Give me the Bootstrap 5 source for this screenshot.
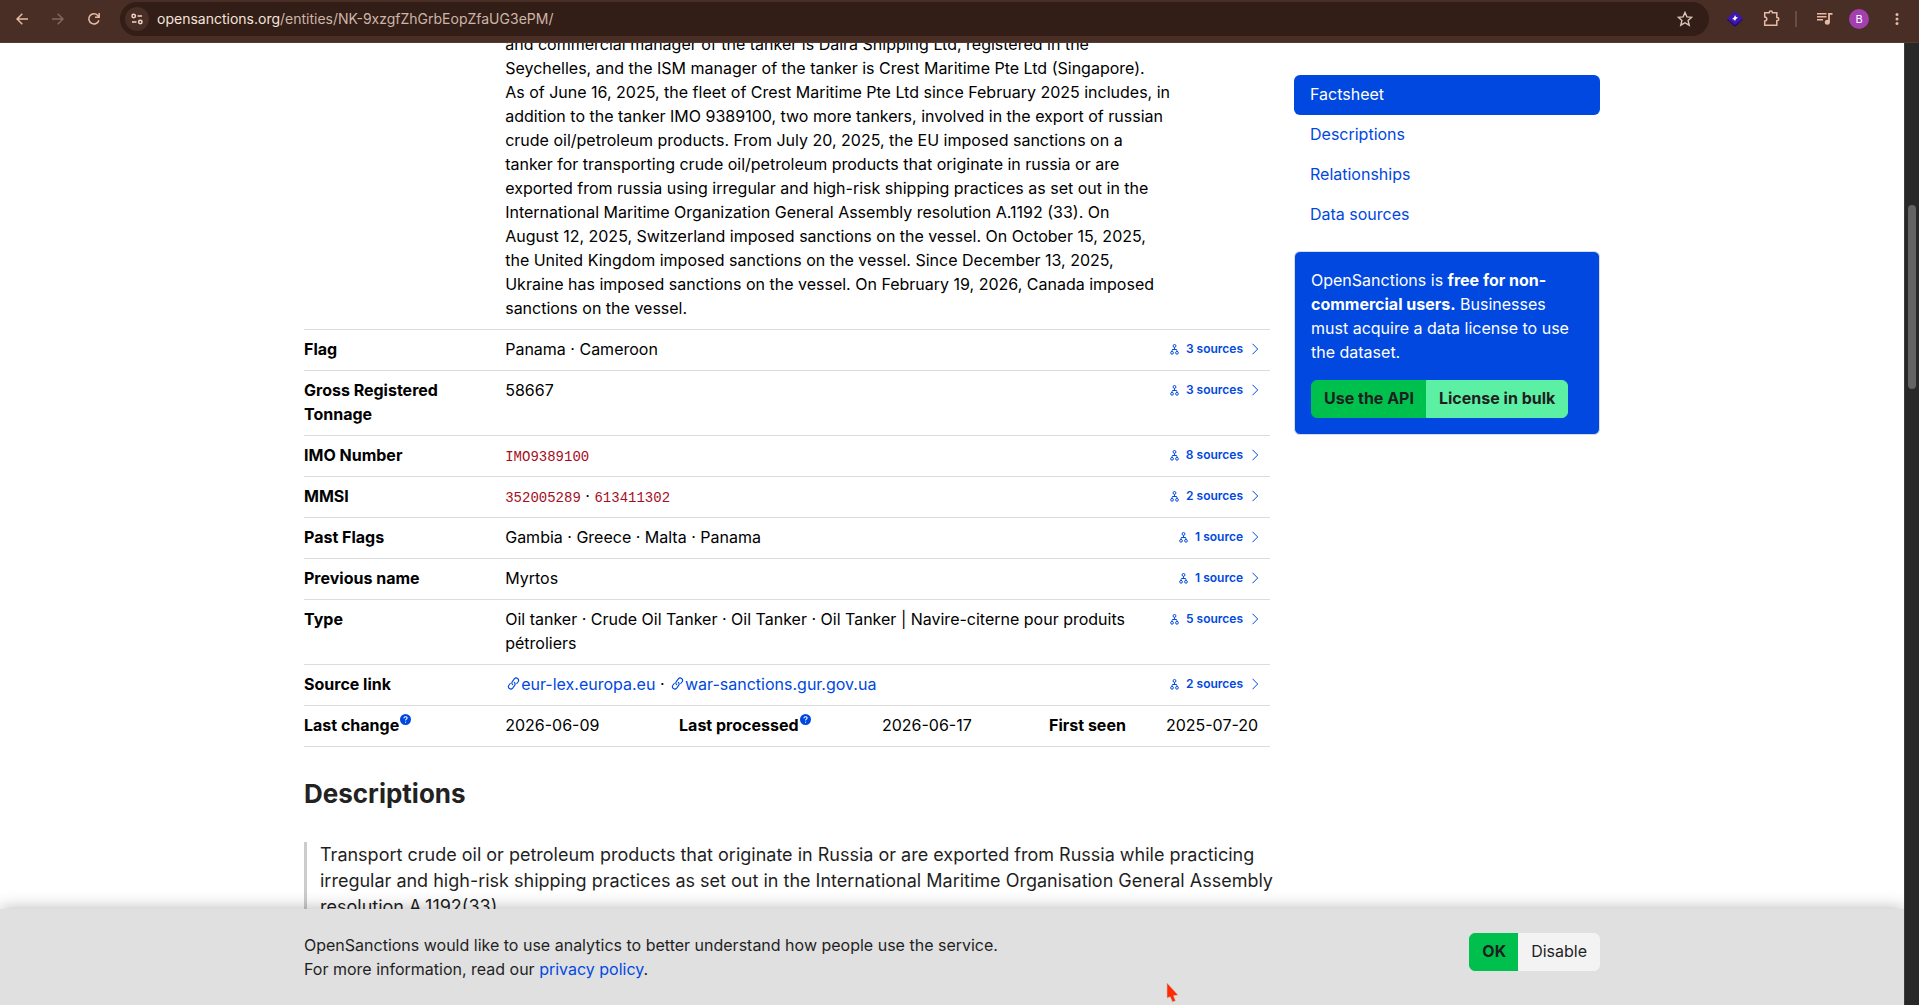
<!DOCTYPE html>
<html lang="en">
<head>
<meta charset="utf-8">
<meta name="viewport" content="width=device-width, initial-scale=1">
<title>OpenSanctions</title>
<link href="https://cdn.jsdelivr.net/npm/bootstrap@5.3.0/dist/css/bootstrap.min.css" rel="stylesheet">
<style>
:root{--os-blue:#0048e0;--os-green:#00c04d;--os-mint:#5cf0a5;--os-dark:#1f1f1f}
body{font-family:Inter,"Liberation Sans",sans-serif;font-size:16px;line-height:24px;color:var(--os-dark)}
a{color:var(--os-blue);text-decoration:none}
svg{display:block;flex:none}
/* browser toolbar */
.toolbar-top{height:43px;padding:2px 10px 7px;background:#482e24;border-bottom:1px solid #543c33;color:#e8b9a4}
.nav-btns{gap:12px}
.tool-btn{width:24px;height:34px;border:0;padding:0;background:none;color:inherit;display:flex;align-items:center;justify-content:center}
.tool-btn:disabled{color:#84685c}
.addr{height:34px;border-radius:17px;background:#321e16;padding:0 12px 0 5px;margin:0 14px}
.site-info{width:24px;height:24px;border-radius:50%;background:#482e24;color:#f2d8cc;border:0;padding:0;display:flex;align-items:center;justify-content:center}
.addr-line{font-size:14px;line-height:20px;color:#cdb5aa}
.addr-line b{font-weight:400;color:#f5e3db}
.tool-sep{width:2px;height:16px;background:#6a4b3e}
.avatar-dot{width:20px;height:20px;border-radius:50%;background:#a43fb0;color:#fff;font-size:11px;line-height:20px;border:0;padding:0}
/* page area */
.pane{height:calc(100vh - 43px)}
.scroll-track{width:15px;background:#282828;border-left:1px solid #3c3c3c;padding:162px 3px 0}
.scroll-thumb{height:184px;border-radius:4px;background:#636363}
.scrolled{margin-top:-11px}
.facts{table-layout:fixed;color:#000;margin:0}
.facts>:not(caption)>*>*{padding:7px 8px 9px;border-color:#dcdcdc;color:#000}
.facts th{font-weight:700;padding-left:0!important}
.facts th.inner-th{padding-left:8px!important}
.facts tr.opening>*{padding-top:0}
.lines{white-space:nowrap}
.facts code{font:14px/20px "Liberation Mono",monospace;color:#a50e1c}
.src{display:flex;justify-content:flex-end;align-items:center;height:24px;padding-right:3px;font-size:12px;font-weight:600;white-space:nowrap}
.src .tree{margin-right:7px}
.src .chev{margin-left:8px}
.link-ic{display:inline-block;margin:-4px 1px 0 2px}
.help-ic{display:inline-block;vertical-align:super;margin-left:1px}
.sec-title{font-size:26px;line-height:32px;font-weight:700;margin:31px 0 32px;color:#222}
.quoted{border-left:3px solid #ccc;padding-left:13px;font-size:18px;line-height:26px;white-space:nowrap;margin:0}
.side{padding-top:32px}
.side .nav-link{padding:7px 16px 9px;color:var(--os-blue);border-radius:6px}
.side .nav-link.active{background:var(--os-blue);color:#fff}
.promo{background:var(--os-blue);color:#fff;border:1px solid #d5dcea;border-radius:6px;margin-top:16px}
.btn{line-height:24px;padding:5px 12px 7px}
.btn-api,.btn-ok{background:var(--os-green)!important;color:var(--os-dark)!important;font-weight:700;border-color:var(--os-green)}
.btn-bulk{background:var(--os-mint)!important;color:var(--os-dark)!important;font-weight:700;border-color:var(--os-mint)}
.btn-off{background:#f3f3f3!important;color:var(--os-dark)!important;border-color:#f3f3f3}
.consent{left:0;right:0;bottom:0;padding:24px 0;background:#e0e0e0;box-shadow:0 0 16px rgba(0,0,0,.3)}
.pointer{left:1166px;bottom:2px}
</style>
</head>
<body class="overflow-hidden">
<svg width="0" height="0" class="position-absolute" aria-hidden="true">
<symbol id="tree" viewBox="0 0 16 20"><g fill="none" stroke="currentColor" stroke-width="1.800"><circle cx="8" cy="3.500" r="2.600"/><path d="M8 6v5M4 10h8M3.500 13c0-2 1-3 1-3M12.500 13c0-2-1-3-1-3"/><circle cx="3.500" cy="16" r="2.500"/><circle cx="12.500" cy="16" r="2.500"/></g></symbol>
<symbol id="chev" viewBox="0 0 8 12"><path d="M1.500 .8L6.700 6l-5.200 5.200" fill="none" stroke="currentColor"/></symbol>
<symbol id="chain" viewBox="0 0 16 16"><g transform="rotate(-8 8 8)" fill="none" stroke="currentColor" stroke-width="1.400" stroke-linecap="round"><path d="M6.800 9.300a3 3 0 0 1 .3-4L9.800 2.600a2.900 2.900 0 0 1 4.100 4.100L12 8.600"/><path d="M9.200 6.700a3 3 0 0 1-.3 4L6.200 13.400a2.900 2.900 0 0 1-4.100-4.100L4 7.400"/></g></symbol>
<symbol id="help" viewBox="0 0 16 16"><circle cx="8" cy="8" r="8" fill="#0048e0"/><path d="M5.700 6.200c0-3 4.700-3 4.700-.3 0 1.700-2.300 1.700-2.300 3.600M8.100 11.200v1.500" fill="none" stroke="#fff" stroke-width="1.500"/></symbol>
</svg>

<header class="toolbar-top d-flex align-items-center">
  <div class="nav-btns d-flex">
  <button class="tool-btn" aria-label="Back"><svg width="12" height="12" viewBox="0 0 12 12" fill="none" stroke="currentColor" stroke-width="1.500"><path d="M12 6H1M6.300.7L1 6l5.300 5.300"/></svg></button>
  <button class="tool-btn" disabled aria-label="Forward"><svg width="12" height="12" viewBox="0 0 12 12" fill="none" stroke="currentColor" stroke-width="1.500"><path d="M0 6h11M5.700.7L11 6l-5.300 5.300"/></svg></button>
  <button class="tool-btn" aria-label="Reload"><svg width="12" height="12" viewBox="0 0 12 12" fill="none" stroke="currentColor" stroke-width="1.500"><path d="M10.900 7.200A5.100 5.100 0 1 1 9.800 2.500L11 3.800M11.200 0v4.300H7"/></svg></button>
  </div>
  <div class="addr d-flex align-items-center flex-grow-1">
    <button class="site-info" aria-label="Site information"><svg width="12" height="12" viewBox="0 0 12 12" fill="none" stroke="currentColor" stroke-width="1.500"><circle cx="2.700" cy="3" r="1.700"/><path d="M6.500 3H11M1 9h4.500"/><circle cx="9.300" cy="9" r="1.700"/></svg></button>
    <div class="addr-line flex-grow-1 ms-2"><b>opensanctions.org</b>/entities/NK-9xzgfZhGrbEopZfaUG3ePM/</div>
    <button class="tool-btn" aria-label="Bookmark"><svg width="16" height="16" viewBox="0 0 16 16" fill="none" stroke="#dcc5ba" stroke-width="1.400"><path d="M8 1.500l1.900 4.400 4.800.4-3.600 3.200 1.100 4.700L8 11.700l-4.200 2.500 1.100-4.700L1.300 6.300l4.800-.4z"/></svg></button>
  </div>
  <div class="d-flex align-items-center gap-2">
    <button class="tool-btn me-1" aria-label="Extension"><svg width="18" height="16" viewBox="0 0 18 16"><path d="M9 2l8 6.500L9 16 1 8.500z" fill="#1c0a72"/><path d="M9 0l8 7.500L9 14 1 7.500z" fill="#3d17b0"/><path d="M9 4l1 2 2 .5-2 1.500-1 2-1-1.500-2-.5 2-1.500z" fill="#fff"/></svg></button>
    <button class="tool-btn" aria-label="Extensions"><svg width="17" height="17" viewBox="0 0 17 17" fill="none" stroke="currentColor" stroke-width="1.500"><path d="M1.700 2.700h4.500c0-2.300 3.200-2.300 3.200 0h4.400v4.700c2.600 0 2.600 3.400 0 3.400v4.500H1.700v-4.200c2.800-.3 2.800-3.900 0-4.200z"/></svg></button>
    <span class="tool-sep ms-1 me-1"></span>
    <button class="tool-btn ms-1" aria-label="Media"><svg width="16" height="14" viewBox="0 0 16 14"><path d="M0 1.800h9.500M0 4.800h9.500M0 7.800h6" stroke="currentColor" stroke-width="1.500"/><path d="M12 10V1.800h3.500" fill="none" stroke="currentColor" stroke-width="1.800"/><circle cx="10.300" cy="10.200" r="2.500" fill="currentColor"/></svg></button>
    <button class="avatar-dot ms-1 me-1" aria-label="Profile">B</button>
    <button class="tool-btn ms-1" aria-label="Menu"><svg width="4" height="12" viewBox="0 0 4 12" fill="currentColor"><circle cx="2" cy="1.500" r="1.500"/><circle cx="2" cy="6" r="1.500"/><circle cx="2" cy="10.500" r="1.500"/></svg></button>
  </div>
</header>

<div class="d-flex pane">
  <div class="flex-grow-1 position-relative overflow-hidden">
    <main class="container">
      <div class="row">
        <div class="col-9">
          <div class="scrolled">
          <table class="table facts">
            <colgroup><col style="width:20%"><col style="width:18%"><col style="width:21%"><col style="width:17.300%"><col style="width:12.100%"><col style="width:11.600%"></colgroup>
            <tbody>
            <tr class="opening"><th></th><td colspan="4" class="lines">and commercial manager of the tanker is Daira Shipping Ltd, registered in the<br>Seychelles, and the ISM manager of the tanker is Crest Maritime Pte Ltd (Singapore).<br>As of June 16, 2025, the fleet of Crest Maritime Pte Ltd since February 2025 includes, in<br>addition to the tanker IMO 9389100, two more tankers, involved in the export of russian<br>crude oil/petroleum products. From July 20, 2025, the EU imposed sanctions on a<br>tanker for transporting crude oil/petroleum products that originate in russia or are<br>exported from russia using irregular and high-risk shipping practices as set out in the<br>International Maritime Organization General Assembly resolution A.1192 (33). On<br>August 12, 2025, Switzerland imposed sanctions on the vessel. On October 15, 2025,<br>the United Kingdom imposed sanctions on the vessel. Since December 13, 2025,<br>Ukraine has imposed sanctions on the vessel. On February 19, 2026, Canada imposed<br>sanctions on the vessel.</td><td></td></tr>
            <tr><th scope="row">Flag</th><td colspan="4">Panama · Cameroon</td><td><a class="src" href="#"><svg class="tree" width="9" height="11"><use href="#tree"/></svg>3 sources<svg class="chev" width="8" height="12"><use href="#chev"/></svg></a></td></tr>
            <tr><th scope="row">Gross Registered Tonnage</th><td colspan="4">58667</td><td><a class="src" href="#"><svg class="tree" width="9" height="11"><use href="#tree"/></svg>3 sources<svg class="chev" width="8" height="12"><use href="#chev"/></svg></a></td></tr>
            <tr><th scope="row">IMO Number</th><td colspan="4"><code>IMO9389100</code></td><td><a class="src" href="#"><svg class="tree" width="9" height="11"><use href="#tree"/></svg>8 sources<svg class="chev" width="8" height="12"><use href="#chev"/></svg></a></td></tr>
            <tr><th scope="row">MMSI</th><td colspan="4"><code>352005289</code> · <code>613411302</code></td><td><a class="src" href="#"><svg class="tree" width="9" height="11"><use href="#tree"/></svg>2 sources<svg class="chev" width="8" height="12"><use href="#chev"/></svg></a></td></tr>
            <tr><th scope="row">Past Flags</th><td colspan="4">Gambia · Greece · Malta · Panama</td><td><a class="src" href="#"><svg class="tree" width="9" height="11"><use href="#tree"/></svg>1 source<svg class="chev" width="8" height="12"><use href="#chev"/></svg></a></td></tr>
            <tr><th scope="row">Previous name</th><td colspan="4">Myrtos</td><td><a class="src" href="#"><svg class="tree" width="9" height="11"><use href="#tree"/></svg>1 source<svg class="chev" width="8" height="12"><use href="#chev"/></svg></a></td></tr>
            <tr><th scope="row">Type</th><td colspan="4">Oil tanker · Crude Oil Tanker · Oil Tanker · Oil Tanker | Navire-citerne pour produits pétroliers</td><td><a class="src" href="#"><svg class="tree" width="9" height="11"><use href="#tree"/></svg>5 sources<svg class="chev" width="8" height="12"><use href="#chev"/></svg></a></td></tr>
            <tr><th scope="row">Source link</th><td colspan="4"><a href="#"><svg class="link-ic" width="13" height="13"><use href="#chain"/></svg>eur-lex.europa.eu</a> · <a href="#"><svg class="link-ic" width="13" height="13"><use href="#chain"/></svg>war-sanctions.gur.gov.ua</a></td><td><a class="src" href="#"><svg class="tree" width="9" height="11"><use href="#tree"/></svg>2 sources<svg class="chev" width="8" height="12"><use href="#chev"/></svg></a></td></tr>
            <tr><th scope="row">Last change<svg class="help-ic" width="11" height="11"><use href="#help"/></svg></th><td>2026-06-09</td><th class="inner-th">Last processed<svg class="help-ic" width="11" height="11"><use href="#help"/></svg></th><td>2026-06-17</td><th class="inner-th">First seen</th><td class="lines">2025-07-20</td></tr>
            </tbody>
          </table>
          <h2 class="sec-title">Descriptions</h2>
          <blockquote class="quoted">Transport crude oil or petroleum products that originate in Russia or are exported from Russia while practicing<br>irregular and high-risk shipping practices as set out in the International Maritime Organisation General Assembly<br>resolution A.1192(33).</blockquote>
          </div>
        </div>
        <div class="col-3 side">
          <nav class="nav nav-pills flex-column">
            <a class="nav-link active" href="#">Factsheet</a>
            <a class="nav-link" href="#">Descriptions</a>
            <a class="nav-link" href="#">Relationships</a>
            <a class="nav-link" href="#">Data sources</a>
          </nav>
          <div class="card promo">
            <div class="card-body p-3">
              <p class="mb-3">OpenSanctions is <strong>free for non-<br>commercial users.</strong> Businesses<br>must acquire a data license to use<br>the dataset.</p>
              <div class="btn-group"><button class="btn btn-api">Use the API</button><button class="btn btn-bulk">License in bulk</button></div>
            </div>
          </div>
        </div>
      </div>
    </main>
    <div class="consent position-absolute">
      <div class="container d-flex justify-content-between align-items-start">
        <p class="mb-0">OpenSanctions would like to use analytics to better understand how people use the service.<br>For more information, read our <a href="#">privacy policy</a>.</p>
        <div class="btn-group"><button class="btn btn-ok">OK</button><button class="btn btn-off">Disable</button></div>
      </div>
    </div>
    <svg class="pointer position-absolute" width="13" height="21" viewBox="0 0 13 21"><path d="M1 1v15l3.200-1.200L6.500 20l3-1.300-2-4.900L12 13z" fill="#ff2a00" stroke="#c9c0be" stroke-width=".6"/></svg>
  </div>
  <div class="scroll-track"><div class="scroll-thumb"></div></div>
</div>
<script src="https://cdn.jsdelivr.net/npm/bootstrap@5.3.0/dist/js/bootstrap.bundle.min.js"></script>
</body>
</html>
